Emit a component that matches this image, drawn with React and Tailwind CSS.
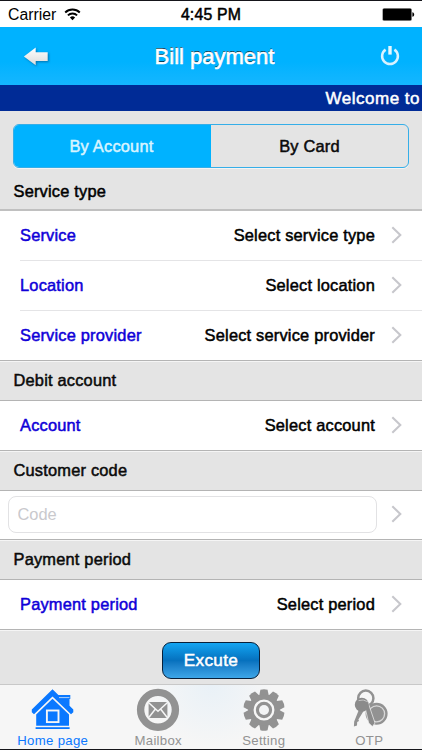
import { useState } from "react";

/* ─── Icons ─── */
const Chevron = () => (
  <svg width="12" height="18" viewBox="0 0 12 18" fill="none" className="mb-px shrink-0">
    <path d="M1.3 1.2L9.3 9L1.3 16.8" stroke="#c7c7cc" strokeWidth="2.1" />
  </svg>
);

const WifiIcon = () => (
  <svg width="17" height="13" viewBox="0 0 17 13" fill="none">
    <path d="M1.2 4.5A10.4 10.4 0 0 1 15.8 4.5" stroke="#000" strokeWidth="1.9" />
    <path d="M3.9 7.4A6.5 6.5 0 0 1 13.1 7.4" stroke="#000" strokeWidth="1.9" />
    <path d="M8.5 12.2L5.9 9.5A3.7 3.7 0 0 1 11.1 9.5Z" fill="#000" />
  </svg>
);

const BatteryIcon = () => (
  <svg width="33" height="13" viewBox="0 0 33 13">
    <rect x="0.4" y="0.2" width="29.4" height="12.6" rx="1.6" fill="#777" />
    <rect x="1" y="0.8" width="28.2" height="11.4" rx="1" fill="#000" />
    <path d="M30.4 4.2C32.8 4.8 32.8 8.2 30.4 8.8Z" fill="#000" />
  </svg>
);

const BackArrow = () => (
  <svg width="28" height="22" viewBox="0 0 28 22" className="drop-shadow-[1px_1px_1px_rgba(0,60,110,0.55)]">
    <defs>
      <linearGradient id="arrow" x1="0" y1="0" x2="0" y2="1">
        <stop offset="0" stopColor="#fff" />
        <stop offset="1" stopColor="#dcdcdc" />
      </linearGradient>
    </defs>
    <path d="M1.9 11.4L13.7 2.5V7.3H25.7V15.9H13.7V20.2Z" fill="url(#arrow)" />
  </svg>
);

const PowerIcon = () => (
  <svg width="22" height="22" viewBox="0 0 22 22" fill="none">
    <path d="M6.6 4.6A7.9 7.9 0 1 0 15.4 4.6" stroke="#d9f2ff" strokeWidth="2.5" />
    <path d="M11 1V9.6" stroke="#e6f7ff" strokeWidth="3.4" />
  </svg>
);

const HomeIcon = () => (
  <svg width="44" height="44" viewBox="0 0 44 44" fill="#0a78ff">
    <path d="M21.5 1.3L.8 21.5V24.2L3 26.2L21.5 8.4L40 26.2L42.3 24.2V21.5L38.5 17.8V11H39.3V7H27.4Z" />
    <path d="M28 9.6H38.5" stroke="#f6f6f6" strokeWidth="0.7" />
    <path d="M21.5 10.8L5.2 26.6V37.8H38V26.6Z" />
    <rect x="4.6" y="39.2" width="34" height="1.8" />
    <rect x="15.9" y="22.5" width="11.6" height="11.6" stroke="#f6f6f6" strokeWidth="1.9" />
  </svg>
);

const MailIcon = () => (
  <svg width="44" height="44" viewBox="0 0 44 44" fill="none">
    <circle cx="22" cy="21.8" r="17.4" stroke="#929292" strokeWidth="7.4" />
    <rect x="12.6" y="14.1" width="18.8" height="15.8" rx="2" fill="#929292" />
    <path d="M13 15L22 23.2L31 15M13 29.2L19.2 21.2M31 29.2L24.8 21.2" stroke="#f6f6f6" strokeWidth="1.5" />
  </svg>
);

const GearIcon = () => (
  <svg width="44" height="44" viewBox="0 0 44 44" fill="none">
    <g fill="#929292">
      {[0, 36, 72, 108, 144, 180, 216, 252, 288, 324].map((deg) => (
        <path key={deg} d="M17 9L18.4 1.7Q22 .7 25.6 1.7L27 9Z" transform={`rotate(${deg} 22 22)`} />
      ))}
    </g>
    <circle cx="22" cy="22" r="15.8" fill="#929292" />
    <circle cx="22" cy="22" r="9.3" stroke="#f6f6f6" strokeWidth="2.3" />
    <circle cx="22" cy="22" r="5" fill="#f3f4f5" />
  </svg>
);

const KeysIcon = () => (
  <svg width="44" height="44" viewBox="0 0 44 44" fill="none">
    <circle cx="18.8" cy="10.2" r="7.6" stroke="#929292" strokeWidth="2.5" />
    <circle cx="29.6" cy="25.8" r="11" fill="#929292" />
    <circle cx="29.6" cy="25.8" r="8" stroke="#d8d8d8" strokeWidth="1.3" />
    <path d="M17.5 17L21.6 16L28 35L25.4 38.6L21.7 35Z" fill="#8b8b8b" stroke="#f4f4f4" strokeWidth="0.7" />
    <path d="M12.2 21L16.9 22.5L11.4 31.5L12 33L10.2 34L10 37.6L6.9 38.6L7.2 33.6Z" fill="#929292" />
    <circle cx="14.8" cy="16.8" r="7" fill="#8b8b8b" />
    <path d="M11.6 12.6Q16 10.8 21 13.8" stroke="#c4c4c4" strokeWidth="1" />
  </svg>
);

/* ─── List Pieces ─── */
const medium = "text-[16.4px] tracking-[0.2px] [-webkit-text-stroke:0.5px_currentColor]";

const Row = ({ label, value, divider }) => (
  <>
    <div className="flex h-[49px] items-center pr-[19px] pl-5">
      <span className={`${medium} text-[#0f00d8]`}>{label}</span>
      <span className={`${medium} mr-4 ml-auto text-black`}>{value}</span>
      <Chevron />
    </div>
    {divider && <div className="ml-5 h-px bg-[#e4e4e6]" />}
  </>
);

const SectionHeader = ({ title }) => (
  <div className="flex h-[41px] items-center border-y border-t-[#b4b4b4] border-b-[#b4b4b4] bg-[#e4e4e4] pl-[13.5px] shadow-[inset_0_1px_0_#f5f5f5]">
    <h2 className={`${medium} text-[#0a0a0a]`}>{title}</h2>
  </div>
);

const serviceRows = [
  { label: "Service", value: "Select service type" },
  { label: "Location", value: "Select location" },
  { label: "Service provider", value: "Select service provider" },
];

const tabs = [
  { label: "Home page", Icon: HomeIcon, active: true },
  { label: "Mailbox", Icon: MailIcon },
  { label: "Setting", Icon: GearIcon },
  { label: "OTP", Icon: KeysIcon },
];

const App = () => {
  const [method, setMethod] = useState("account");

  return (
    <div className="flex h-[750px] w-[422px] flex-col overflow-hidden border-y border-[#15151a] bg-[#e4e4e4] font-['Liberation_Sans',Arial,sans-serif]">

      {/* ── Status Bar ── */}
      <div className="grid h-[26px] shrink-0 grid-cols-3 items-center bg-white text-[15.8px] text-black">
        <div className="flex items-center gap-2 pt-px pl-2">
          <span>Carrier</span>
          <WifiIcon />
        </div>
        <span className="pt-0.5 text-center tracking-[0.2px] [-webkit-text-stroke:0.5px_currentColor]">4:45 PM</span>
        <div className="flex justify-end pt-px pr-[7px]">
          <BatteryIcon />
        </div>
      </div>

      {/* ── Nav Bar ── */}
      <div className="flex h-[58px] shrink-0 items-center justify-between bg-gradient-to-b from-[#00b2ff] from-60% to-[#14b6ff] pr-[21px] pl-[22px]">
        <button><BackArrow /></button>
        <h1 className="text-[22px] text-white [-webkit-text-stroke:0.6px_currentColor] [text-shadow:0_-1px_0_rgba(0,0,0,0.8)]">Bill payment</h1>
        <button><PowerIcon /></button>
      </div>

      {/* ── Marquee ── */}
      <div className="flex h-[26px] shrink-0 items-center justify-end bg-[#002b96] pt-0.5 pr-[2px]">
        <span className="text-[17px] tracking-[0.5px] text-white [-webkit-text-stroke:0.5px_currentColor]">Welcome to</span>
      </div>

      {/* ── Method Switch ── */}
      <div className="flex h-[100px] shrink-0 flex-col border-b-2 border-[#c0c0c0] pt-[13px]">
        <div className="mx-[13px] grid h-[44px] shrink-0 grid-cols-2 overflow-hidden rounded-[6px] border-[1.5px] border-[#35aee8] shadow-[0_1px_0_#f4f4f4]">
          <button
            onClick={() => setMethod("account")}
            className={`${medium} pr-0.5 ${method === "account" ? "bg-[#00b2ff] text-[#d9f4ff]" : "text-[#0a0a0a]"}`}
          >
            By Account
          </button>
          <button
            onClick={() => setMethod("card")}
            className={`${medium} ${method === "card" ? "bg-[#00b2ff] text-[#d9f4ff]" : "text-[#0a0a0a]"}`}
          >
            By Card
          </button>
        </div>
        <h2 className={`${medium} pt-[11px] pl-[13.5px] leading-6 text-black`}>Service type</h2>
      </div>

      {/* ── Form ── */}
      <div className="shrink-0 bg-white">
        {serviceRows.map((row, i) => (
          <Row key={row.label} {...row} divider={i < serviceRows.length - 1} />
        ))}
        <SectionHeader title="Debit account" />
        <Row label="Account" value="Select account" />
        <SectionHeader title="Customer code" />
        <div className="flex h-[48px] items-center justify-between pr-[19px] pb-px pl-2">
          <input
            placeholder="Code"
            className="h-[37px] w-[369px] rounded-[8px] border border-[#e2e2e4] px-[8.5px] text-[16.4px] placeholder:text-[#c9c9cd]"
          />
          <Chevron />
        </div>
        <SectionHeader title="Payment period" />
        <Row label="Payment period" value="Select period" />
      </div>

      {/* ── Submit ── */}
      <div className="flex min-h-0 flex-1 justify-center border-t border-[#b4b4b4] pt-[12px] shadow-[inset_0_1px_0_#f5f5f5]">
        <button className="h-[37px] w-[98px] rounded-[9px] border border-[#08203a] bg-gradient-to-b from-[#14a5f2] via-[#0671be] via-50% to-[#3da6e8] text-[17.2px] tracking-[0.3px] text-white [-webkit-text-stroke:0.5px_currentColor]">
          Excute
        </button>
      </div>

      {/* ── Tab Bar ── */}
      <div className="grid h-[65px] shrink-0 grid-cols-4 border-t border-[#c8c8c8] bg-[radial-gradient(circle_at_50%_0%,#e9f1f7,#f6f6f6_28%)]">
        {tabs.map(({ label, Icon, active }) => (
          <button key={label} className={`flex flex-col items-center pt-[3px] ${active ? "text-[#0a78ff]" : "text-[#929292]"}`}>
            <Icon />
            <span className="text-[13.2px] leading-[17px] tracking-[0.3px]">{label}</span>
          </button>
        ))}
      </div>
    </div>
  );
};

export default App;
